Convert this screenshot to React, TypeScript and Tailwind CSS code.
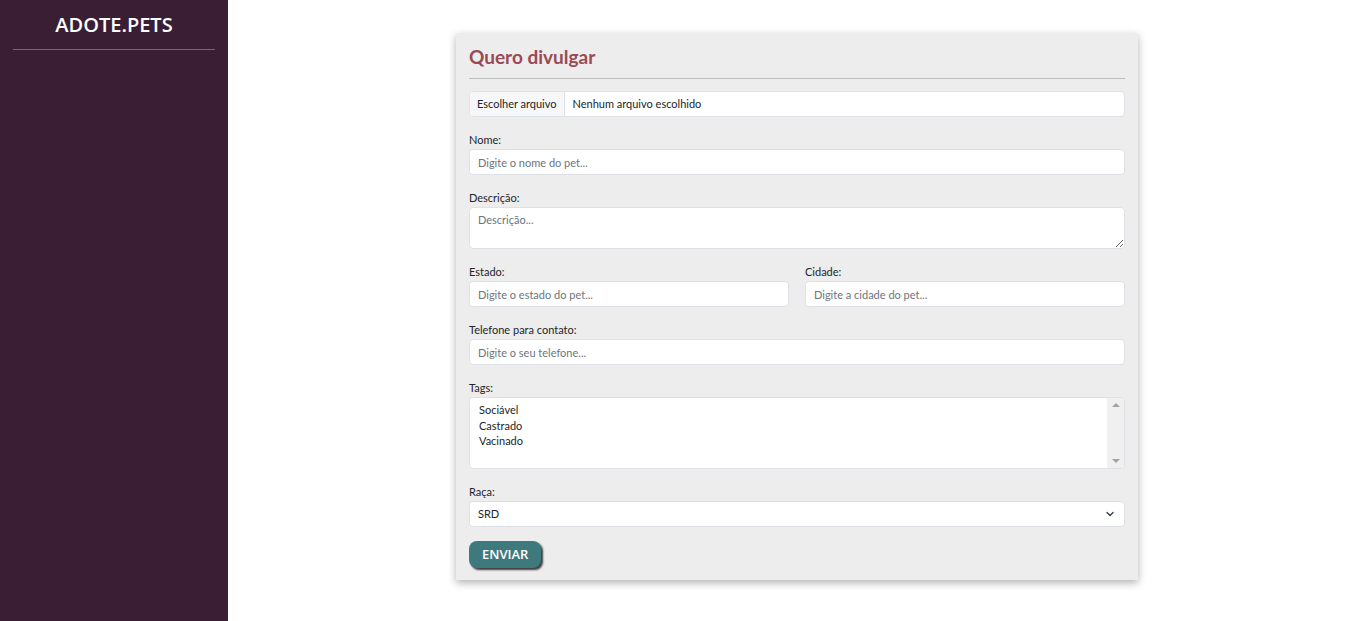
import { ChevronDown } from 'lucide-react';

const inputCls =
  'block w-full h-[26px] rounded-[4px] border border-[#dee2e6] bg-white px-[8px] text-[11px] text-[#212529] placeholder:text-[#6c757d] outline-none';

function Label({ children }: { children: string }) {
  return <label className="block text-[11px] leading-[12px] text-[#212529] mb-[3px]">{children}</label>;
}

function App() {
  const tags = ['Sociável', 'Castrado', 'Vacinado'];

  return (
    <div className="flex min-h-screen bg-white" style={{ fontFamily: '"Open Sans", "Noto Sans", sans-serif' }}>
      <aside className="w-[228px] shrink-0 bg-[#3a1e34] px-[13px]">
        <h1 className="pt-[12px] pb-[11px] text-center text-[20px] leading-[26px] font-semibold text-white">
          ADOTE.PETS
        </h1>
        <hr className="border-t border-[#7b6477]" />
      </aside>

      <main className="flex flex-1 justify-center pt-[33px] pl-[3px]">
        <form
          className="w-[682px] self-start bg-[#ededed] px-[13px] pt-[11px] pb-[12px] shadow-[0_3px_8px_rgba(0,0,0,0.3)]"
          style={{ fontFamily: 'Lato, "Open Sans", sans-serif' }}
        >
          <h2 className="text-[19px] leading-[26px] font-bold text-[#9a4a54]">Quero divulgar</h2>
          <hr className="mt-[8px] mb-[12px] border-t border-[#bdbdbd]" />

          <div className="flex h-[26px] overflow-hidden rounded-[4px] border border-[#dee2e6] bg-white text-[11px] text-[#212529]">
            <span className="flex items-center border-r border-[#dee2e6] bg-[#f6f7f8] px-[7px]">Escolher arquivo</span>
            <span className="flex items-center px-[8px]">Nenhum arquivo escolhido</span>
          </div>

          <div className="mt-[17px]">
            <Label>Nome:</Label>
            <input className={inputCls} placeholder="Digite o nome do pet..." />
          </div>

          <div className="mt-[17px]">
            <Label>Descrição:</Label>
            <textarea
              className="block w-full h-[42px] rounded-[4px] border border-[#dee2e6] bg-white px-[8px] py-[4px] text-[11px] leading-[16px] placeholder:text-[#6c757d] outline-none"
              placeholder="Descrição..."
            />
          </div>

          <div className="mt-[17px] grid grid-cols-2 gap-[16px]">
            <div>
              <Label>Estado:</Label>
              <input className={inputCls} placeholder="Digite o estado do pet..." />
            </div>
            <div>
              <Label>Cidade:</Label>
              <input className={inputCls} placeholder="Digite a cidade do pet..." />
            </div>
          </div>

          <div className="mt-[17px]">
            <Label>Telefone para contato:</Label>
            <input className={inputCls} placeholder="Digite o seu telefone..." />
          </div>

          <div className="mt-[17px]">
            <Label>Tags:</Label>
            <div className="flex h-[72px] overflow-hidden rounded-[4px] border border-[#dee2e6] bg-white">
              <ul className="flex-1 px-[9px] pt-[4px] text-[11px] leading-[15.5px] text-[#212529]">
                {tags.map((t) => (
                  <li key={t}>{t}</li>
                ))}
              </ul>
              <div className="flex w-[17px] flex-col items-center justify-between bg-[#f0f0f0] py-[5px]">
                <span className="h-0 w-0 border-x-[4px] border-b-[4px] border-x-transparent border-b-[#a3a3a3]" />
                <span className="h-0 w-0 border-x-[4px] border-t-[4px] border-x-transparent border-t-[#a3a3a3]" />
              </div>
            </div>
          </div>

          <div className="mt-[17px]">
            <Label>Raça:</Label>
            <div className="flex h-[26px] items-center justify-between rounded-[4px] border border-[#dee2e6] bg-white px-[8px] text-[11px] text-[#212529]">
              <span>SRD</span>
              <ChevronDown className="h-[12px] w-[12px] text-[#343a40]" strokeWidth={2.5} />
            </div>
          </div>

          <button
            type="button"
            className="mt-[14px] block h-[27px] rounded-[8px] bg-[#3e7a7d] px-[13px] text-[13px] font-semibold text-white shadow-[2px_2px_2px_rgba(0,0,0,0.75)]"
            style={{ fontFamily: '"Open Sans", sans-serif' }}
          >
            ENVIAR
          </button>
        </form>
      </main>
    </div>
  );
}

export default App;
